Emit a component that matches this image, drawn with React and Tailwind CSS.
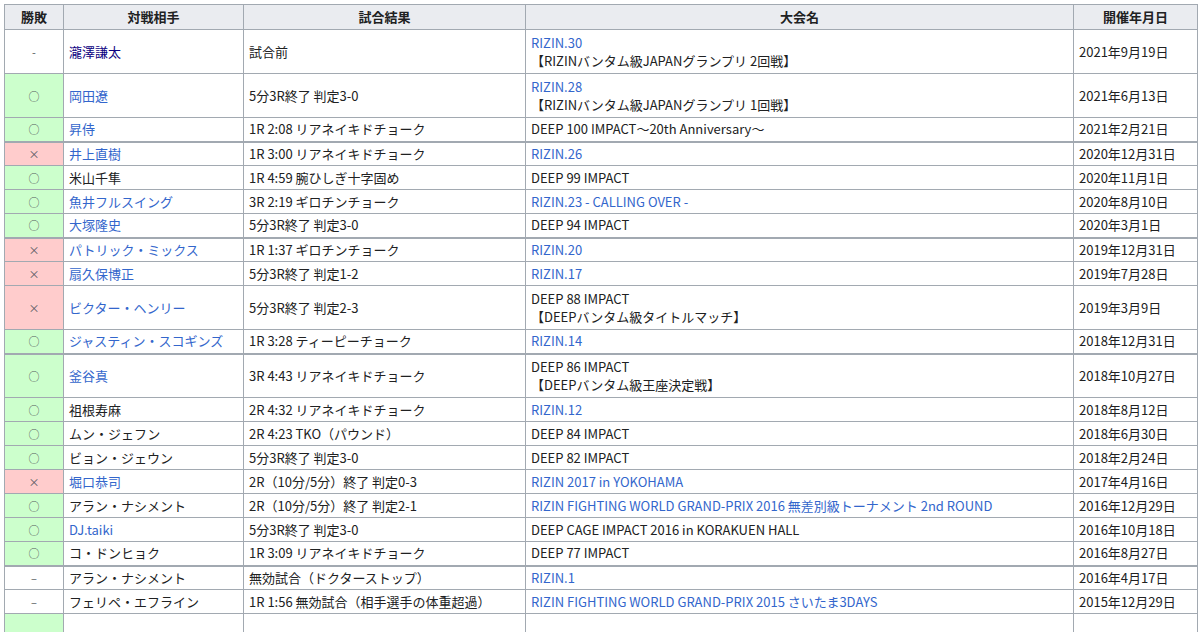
const rows = [
  { r: "-", bg: "", name: "瀧澤謙太", nl: "v", res: "試合前", ev: ["RIZIN.30", "【RIZINバンタム級JAPANグランプリ 2回戦】"], el: true, d: "2021年9月19日" },
  { r: "○", bg: "g", name: "岡田遼", nl: "l", res: "5分3R終了 判定3-0", ev: ["RIZIN.28", "【RIZINバンタム級JAPANグランプリ 1回戦】"], el: true, d: "2021年6月13日" },
  { r: "○", bg: "g", name: "昇侍", nl: "l", res: "1R 2:08 リアネイキドチョーク", ev: ["DEEP 100 IMPACT～20th Anniversary～"], d: "2021年2月21日" },
  { r: "×", bg: "r", name: "井上直樹", nl: "l", res: "1R 3:00 リアネイキドチョーク", ev: ["RIZIN.26"], el: true, d: "2020年12月31日", t: true },
  { r: "○", bg: "g", name: "米山千隼", res: "1R 4:59 腕ひしぎ十字固め", ev: ["DEEP 99 IMPACT"], d: "2020年11月1日" },
  { r: "○", bg: "g", name: "魚井フルスイング", nl: "l", res: "3R 2:19 ギロチンチョーク", ev: ["RIZIN.23 - CALLING OVER -"], el: true, d: "2020年8月10日" },
  { r: "○", bg: "g", name: "大塚隆史", nl: "l", res: "5分3R終了 判定3-0", ev: ["DEEP 94 IMPACT"], d: "2020年3月1日" },
  { r: "×", bg: "r", name: "パトリック・ミックス", nl: "l", res: "1R 1:37 ギロチンチョーク", ev: ["RIZIN.20"], el: true, d: "2019年12月31日", t: true },
  { r: "×", bg: "r", name: "扇久保博正", nl: "l", res: "5分3R終了 判定1-2", ev: ["RIZIN.17"], el: true, d: "2019年7月28日" },
  { r: "×", bg: "r", name: "ビクター・ヘンリー", nl: "l", res: "5分3R終了 判定2-3", ev: ["DEEP 88 IMPACT", "【DEEPバンタム級タイトルマッチ】"], d: "2019年3月9日" },
  { r: "○", bg: "g", name: "ジャスティン・スコギンズ", nl: "l", res: "1R 3:28 ティーピーチョーク", ev: ["RIZIN.14"], el: true, d: "2018年12月31日" },
  { r: "○", bg: "g", name: "釜谷真", nl: "l", res: "3R 4:43 リアネイキドチョーク", ev: ["DEEP 86 IMPACT", "【DEEPバンタム級王座決定戦】"], d: "2018年10月27日", t: true },
  { r: "○", bg: "g", name: "祖根寿麻", res: "2R 4:32 リアネイキドチョーク", ev: ["RIZIN.12"], el: true, d: "2018年8月12日" },
  { r: "○", bg: "g", name: "ムン・ジェフン", res: "2R 4:23 TKO（パウンド）", ev: ["DEEP 84 IMPACT"], d: "2018年6月30日" },
  { r: "○", bg: "g", name: "ビョン・ジェウン", res: "5分3R終了 判定3-0", ev: ["DEEP 82 IMPACT"], d: "2018年2月24日" },
  { r: "×", bg: "r", name: "堀口恭司", nl: "l", res: "2R（10分/5分）終了 判定0-3", ev: ["RIZIN 2017 in YOKOHAMA"], el: true, d: "2017年4月16日" },
  { r: "○", bg: "g", name: "アラン・ナシメント", res: "2R（10分/5分）終了 判定2-1", ev: ["RIZIN FIGHTING WORLD GRAND-PRIX 2016 無差別級トーナメント 2nd ROUND"], el: true, d: "2016年12月29日" },
  { r: "○", bg: "g", name: "DJ.taiki", nl: "l", res: "5分3R終了 判定3-0", ev: ["DEEP CAGE IMPACT 2016 in KORAKUEN HALL"], d: "2016年10月18日" },
  { r: "○", bg: "g", name: "コ・ドンヒョク", res: "1R 3:09 リアネイキドチョーク", ev: ["DEEP 77 IMPACT"], d: "2016年8月27日" },
  { r: "–", bg: "", name: "アラン・ナシメント", res: "無効試合（ドクターストップ）", ev: ["RIZIN.1"], el: true, d: "2016年4月17日", t: true },
  { r: "–", bg: "", name: "フェリペ・エフライン", res: "1R 1:56 無効試合（相手選手の体重超過）", ev: ["RIZIN FIGHTING WORLD GRAND-PRIX 2015 さいたま3DAYS"], el: true, d: "2015年12月29日" },
  { r: "", bg: "g", name: "", res: "", ev: [""], d: "" },
];

export default function App() {
  const cell = "border border-[#a2a9b1] px-[5px] py-0 align-middle";
  return (
    <div className="bg-white w-[1200px] h-[632px] overflow-hidden pt-[4px] pl-[4px]" style={{ fontFamily: '"Noto Sans CJK JP", "Noto Sans", sans-serif' }}>
      <table className="border-collapse text-[13px] leading-[18px] text-[#202122] w-[1193px] table-fixed">
        <colgroup>
          <col className="w-[59px]" /><col className="w-[180px]" /><col className="w-[282px]" /><col className="w-[548px]" /><col className="w-[124px]" />
        </colgroup>
        <thead>
          <tr className="bg-[#eaecf0] h-[25px]">
            {["勝敗", "対戦相手", "試合結果", "大会名", "開催年月日"].map((h) => (
              <th key={h} className={cell + " text-center font-bold"}>{h}</th>
            ))}
          </tr>
        </thead>
        <tbody>
          {rows.map((x, i) => (
            <tr key={i} className={(x.ev.length > 1 ? "h-[44px]" : "h-[24px]") + (x.t ? " border-t-2 border-t-[#a2a9b1]" : "")}>
              <td className={cell + " text-center text-[#54595d] text-[11px] " + (x.bg === "g" ? "bg-[#ccffcc]" : x.bg === "r" ? "bg-[#ffcccc]" : "bg-white")}>{x.r}</td>
              <td className={cell + (x.nl === "v" ? " text-[#0b0080]" : x.nl === "l" ? " text-[#3366cc]" : "")}>{x.name}</td>
              <td className={cell}>{x.res}</td>
              <td className={cell}>
                <div className={x.el ? "text-[#3366cc]" : ""}>{x.ev[0]}</div>
                {x.ev[1] && <div>{x.ev[1]}</div>}
              </td>
              <td className={cell}>{x.d}</td>
            </tr>
          ))}
        </tbody>
      </table>
    </div>
  );
}
